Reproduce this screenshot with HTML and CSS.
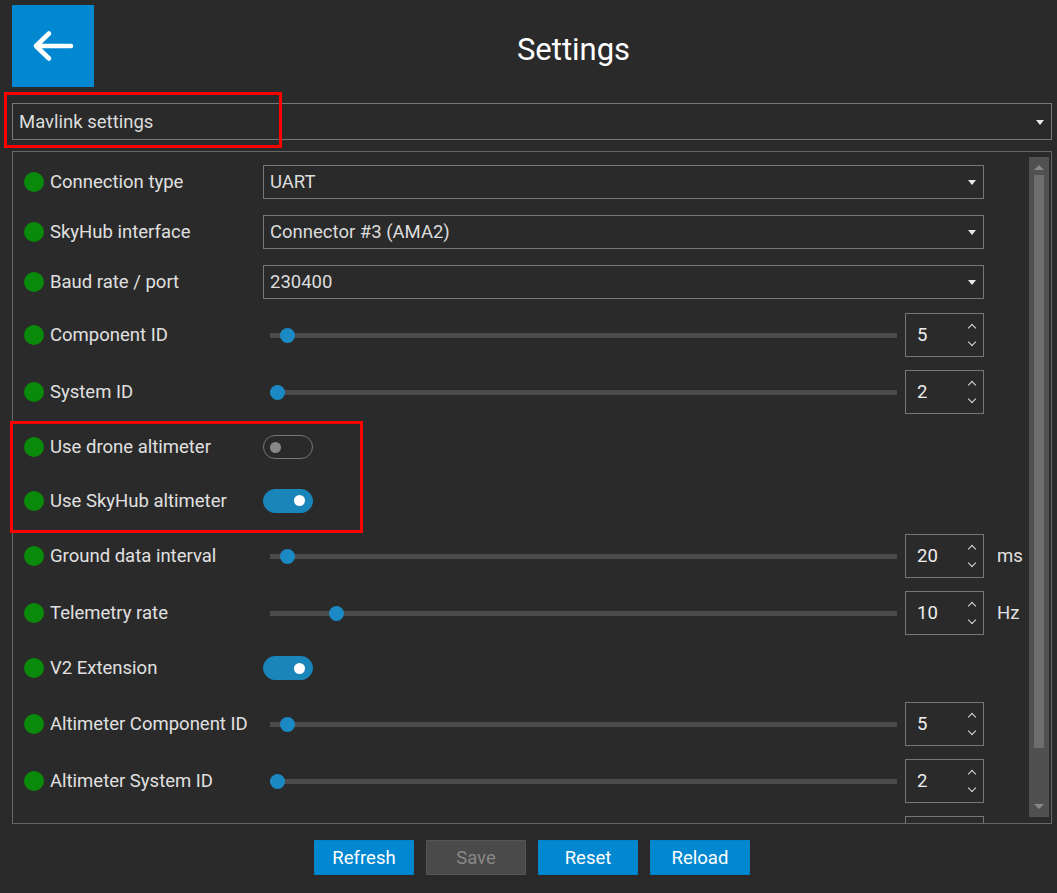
FILE: index.html
```html
<!DOCTYPE html>
<html>
<head>
<meta charset="utf-8">
<link rel="stylesheet" href="styles.css">
</head>
<body>
<div class="app">
  <header class="header">
    <button class="back">
      <svg width="44" height="34" viewBox="0 0 44 34"><path d="M40 17 H6 M18 4.5 L5 17 L18 29.5" fill="none" stroke="#fff" stroke-width="4.6" stroke-linecap="round" stroke-linejoin="round"/></svg>
    </button>
    <h1 class="title">Settings</h1>
  </header>

  <div class="select top-select"><span>Mavlink settings</span><i class="caret"></i></div>

  <div class="panel">
    <div class="rows">
      <div class="row r-select"><span class="dot"></span><span class="label">Connection type</span><div class="select ctl"><span>UART</span><i class="caret"></i></div></div>
      <div class="row r-select"><span class="dot"></span><span class="label">SkyHub interface</span><div class="select ctl"><span>Connector #3 (AMA2)</span><i class="caret"></i></div></div>
      <div class="row r-select"><span class="dot"></span><span class="label">Baud rate / port</span><div class="select ctl"><span>230400</span><i class="caret"></i></div></div>

      <div class="row r-spin"><span class="dot"></span><span class="label">Component ID</span>
        <div class="slider"><div class="track"></div><div class="thumb" style="left:24px"></div></div>
        <div class="spin"><span>5</span><span class="arrows"><i class="up"></i><i class="down"></i></span></div></div>
      <div class="row r-spin"><span class="dot"></span><span class="label">System ID</span>
        <div class="slider"><div class="track"></div><div class="thumb" style="left:14px"></div></div>
        <div class="spin"><span>2</span><span class="arrows"><i class="up"></i><i class="down"></i></span></div></div>

      <div class="row r-toggle"><span class="dot"></span><span class="label">Use drone altimeter</span><div class="toggle"><i></i></div></div>
      <div class="row r-toggle"><span class="dot"></span><span class="label">Use SkyHub altimeter</span><div class="toggle on"><i></i></div></div>

      <div class="row r-spin"><span class="dot"></span><span class="label">Ground data interval</span>
        <div class="slider"><div class="track"></div><div class="thumb" style="left:24px"></div></div>
        <div class="spin"><span>20</span><span class="arrows"><i class="up"></i><i class="down"></i></span></div><span class="unit">ms</span></div>
      <div class="row r-spin"><span class="dot"></span><span class="label">Telemetry rate</span>
        <div class="slider"><div class="track"></div><div class="thumb" style="left:73px"></div></div>
        <div class="spin"><span>10</span><span class="arrows"><i class="up"></i><i class="down"></i></span></div><span class="unit">Hz</span></div>

      <div class="row r-toggle"><span class="dot"></span><span class="label">V2 Extension</span><div class="toggle on"><i></i></div></div>

      <div class="row r-spin"><span class="dot"></span><span class="label">Altimeter Component ID</span>
        <div class="slider"><div class="track"></div><div class="thumb" style="left:24px"></div></div>
        <div class="spin"><span>5</span><span class="arrows"><i class="up"></i><i class="down"></i></span></div></div>
      <div class="row r-spin"><span class="dot"></span><span class="label">Altimeter System ID</span>
        <div class="slider"><div class="track"></div><div class="thumb" style="left:14px"></div></div>
        <div class="spin"><span>2</span><span class="arrows"><i class="up"></i><i class="down"></i></span></div></div>
      <div class="row r-spin"><span class="dot hidden"></span><span class="label"></span>
        <div class="slider"></div>
        <div class="spin"></div></div>
    </div>
    <div class="scrollbar">
      <i class="sb-up"></i>
      <div class="sb-track"><div class="sb-thumb"></div></div>
      <i class="sb-down"></i>
    </div>
  </div>

  <div class="buttons">
    <button class="btn">Refresh</button>
    <button class="btn disabled">Save</button>
    <button class="btn">Reset</button>
    <button class="btn">Reload</button>
  </div>

  <div class="mark mark-1"></div>
  <div class="mark mark-2"></div>
</div>
</body>
</html>
```

FILE: styles.css
```css
* { box-sizing: border-box; }
html, body { margin: 0; padding: 0; background: #2a2a2a; }
body { font-family: Roboto, "Liberation Sans", sans-serif; color: #e0e0e0; }

.app { position: relative; width: 1057px; height: 893px; padding: 5px 5px 0 12px; display: flex; flex-direction: column; }

.header { position: relative; height: 82px; display: flex; align-items: center; }
.back { width: 82px; height: 82px; background: #0288d1; border: none; padding: 0; display: flex; align-items: center; justify-content: center; }
.title { position: absolute; left: 0; right: 0; top: 0; margin: 0; text-align: center; font-weight: 400; font-size: 31px; line-height: 90px; color: #fff; padding-left: 83px; pointer-events: none; }

.select { position: relative; border: 1px solid #777; display: flex; align-items: center; font-size: 18.5px; color: #ddd; padding-left: 6px; }
.top-select { margin-top: 16px; height: 37px; width: 1040px; }
.caret { position: absolute; right: 7px; top: 50%; margin-top: -2px; width: 0; height: 0; border-left: 4px solid transparent; border-right: 4px solid transparent; border-top: 5px solid #e8e8e8; }

.panel { margin-top: 11px; width: 1040px; height: 673px; border: 1px solid #666; display: flex; overflow: hidden; }
.rows { flex: 1; padding-top: 4.5px; overflow: hidden; }
.row { display: flex; align-items: center; padding-left: 11px; }
.r-select { height: 50px; }
.r-spin { height: 57px; }
.r-toggle { height: 53.5px; }
.dot { width: 20px; height: 20px; border-radius: 50%; background: #0a8a0a; flex: none; }
.dot.hidden { visibility: hidden; }
.label { width: 213px; margin-left: 6px; font-size: 18.5px; color: #e0e0e0; flex: none; white-space: nowrap; }
.ctl { width: 721px; height: 34px; }

.slider { position: relative; width: 642px; height: 16px; flex: none; }
.track { position: absolute; left: 7px; right: 8px; top: 6px; height: 5px; background: #4b4b4b; }
.thumb { position: absolute; top: 1px; width: 15px; height: 15px; margin-left: -7px; border-radius: 50%; background: #1b8ac4; }

.spin { width: 79px; height: 44px; border: 1px solid #777; display: flex; align-items: center; justify-content: space-between; padding: 0 8px 0 11px; font-size: 18.5px; color: #eee; flex: none; }
.arrows { display: flex; flex-direction: column; justify-content: space-between; height: 26px; }
.arrows i { width: 6px; height: 6px; border-left: 1.6px solid #ddd; border-top: 1.6px solid #ddd; display: block; }
.arrows .up { transform: rotate(45deg); margin-top: 3px; }
.arrows .down { transform: rotate(-135deg); margin-bottom: 3px; }
.unit { margin-left: 13px; font-size: 18.5px; color: #e0e0e0; }

.toggle { position: relative; width: 50px; height: 24px; border-radius: 12px; border: 1.5px solid #777; flex: none; }
.toggle i { position: absolute; left: 6px; top: 5.5px; width: 11px; height: 11px; border-radius: 50%; background: #888; }
.toggle.on { background: #1a85b8; border-color: #1a85b8; }
.toggle.on i { left: auto; right: 7px; background: #fff; width: 11px; height: 11px; }

.scrollbar { width: 20px; margin: 5px 2px 6px 0; background: #505050; display: flex; flex-direction: column; align-items: center; }
.sb-up, .sb-down { width: 0; height: 0; border-left: 5px solid transparent; border-right: 5px solid transparent; }
.sb-up { border-bottom: 5px solid #888; margin-top: 8px; }
.sb-down { border-top: 5px solid #888; margin-bottom: 8px; }
.sb-track { flex: 1; width: 10px; padding: 5px 0 6px; }
.sb-thumb { width: 10px; height: 573px; background: #6e6e6e; }

.buttons { display: flex; justify-content: center; gap: 12px; margin-top: 16px; }
.btn { width: 100px; height: 35px; background: #0288d1; border: 1px solid #0280c4; color: #fff; font-family: Roboto, "Liberation Sans", sans-serif; font-size: 18.5px; padding: 0; }
.btn.disabled { background: #4a4a4a; border-color: #555; color: #888; }

.mark { position: absolute; border: 3px solid #f00; pointer-events: none; }
.mark-1 { left: 4px; top: 92px; width: 278px; height: 56px; }
.mark-2 { left: 10px; top: 421px; width: 353px; height: 112px; }
```
